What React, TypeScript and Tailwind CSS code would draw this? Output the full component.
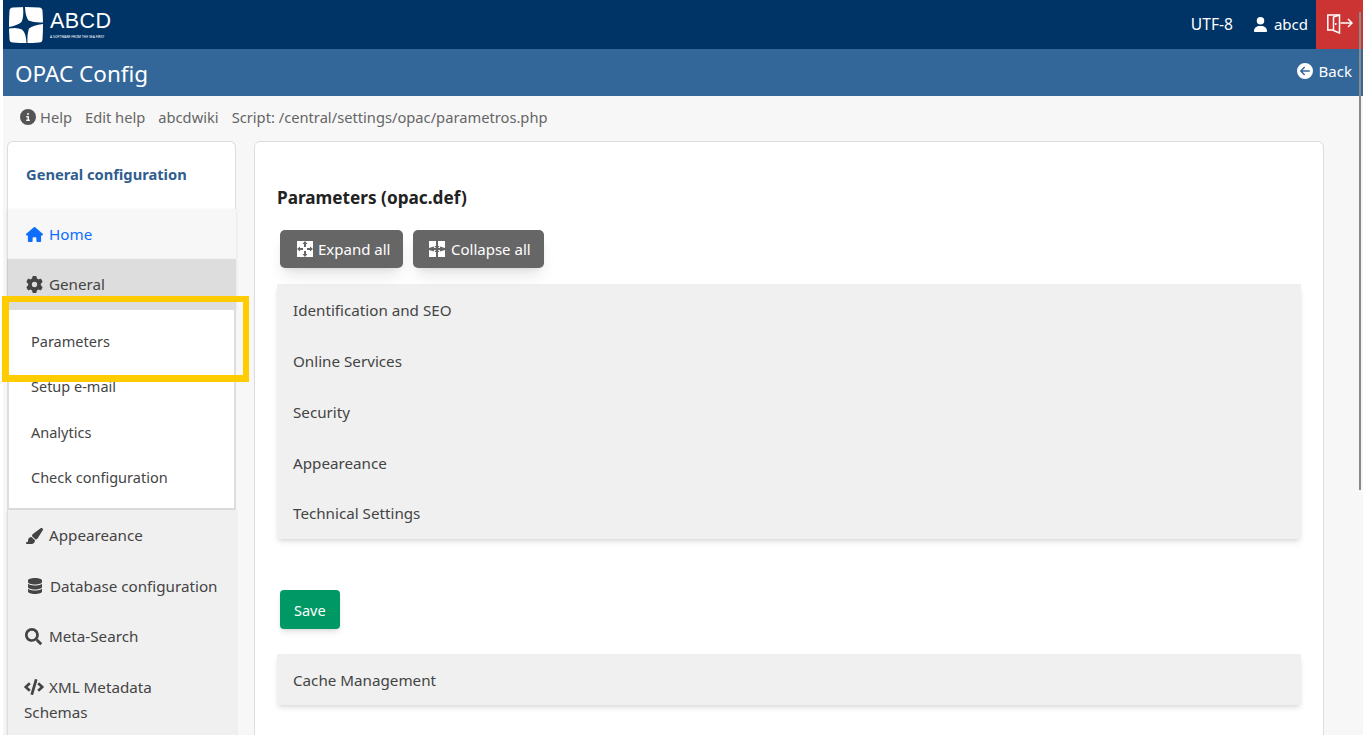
import { FaCode, FaSearch } from "react-icons/fa";
import { FaCircleArrowLeft, FaCircleInfo, FaDatabase, FaGear, FaHouse, FaPaintbrush, FaUser } from "react-icons/fa6";

const subItems = ["Parameters", "Setup e-mail", "Analytics", "Check configuration"];
const sections = ["Identification and SEO", "Online Services", "Security", "Appeareance", "Technical Settings"];

const Logo = () => (
    <svg width="34" height="36" viewBox="0 0 34 36">
        <path d="M4 .5 Q17 -.5 30 .5 Q33.5 .5 33.5 4 Q34.5 18 33.5 32 Q33.5 35.5 30 35.5 Q17 36.5 4 35.5 Q.5 35.5 .5 32 Q-.5 18 .5 4 Q.5 .5 4 .5 Z" fill="#fff" />
        <path d="M14 0 L16 0 Q16.5 10 19.5 13.5 Q25 16 34 15.5 L34 17 Q24 18 20 21.5 Q18 27 18.5 36 L17.5 36 Q17 26 13 22.5 Q8 20 0 21.5 L0 20 Q8 18.5 12.5 15 Q15 10 14 0 Z" fill="#003366" />
    </svg>
);

const LogoutIcon = () => (
    <svg width="26" height="21" viewBox="0 0 26 21" fill="none" stroke="#fff" strokeWidth="1.5">
        <path d="M12.5 2 H.8 V17 H6.5" />
        <path d="M12.5 2 V20 L6.5 17.5 V4 L12.5 2 Z" />
        <circle cx="8.8" cy="11" r=".9" fill="#fff" stroke="none" />
        <path d="M13.5 10 H25 M21 6 L25 10 L21 14" />
    </svg>
);

const ExpandIcon = () => (
    <svg width="16" height="16" viewBox="0 0 16 16">
        <rect width="16" height="16" fill="#fff" />
        <path d="M8 0 L10.5 3 H9 V6 H7 V3 H5.5 Z M8 16 L5.5 13 H7 V10 H9 V13 H10.5 Z M0 8 L3 5.5 V7 H6 V9 H3 V10.5 Z M16 8 L13 10.5 V9 H10 V7 H13 V5.5 Z" fill="#666" />
    </svg>
);

const CollapseIcon = () => (
    <svg width="16" height="16" viewBox="0 0 16 16" fill="#fff">
        <path d="M0 0 H7 V5 L5.5 5 L7 7 H5 L5 5.5 L0 7 Z" />
        <path d="M16 0 H9 V5 L10.5 5 L9 7 H11 L11 5.5 L16 7 Z" />
        <path d="M0 16 H7 V11 L5.5 11 L7 9 H5 L5 10.5 L0 9 Z" />
        <path d="M16 16 H9 V11 L10.5 11 L9 9 H11 L11 10.5 L16 9 Z" />
    </svg>
);

export default function App() {
    return (
        <div className="h-[735px] overflow-hidden bg-white pl-[3px] text-[15.2px] text-[#444] relative" style={{ fontFamily: '"Noto Sans", sans-serif' }}>
            <div className="h-[49px] bg-[#003366] flex items-center justify-between text-white">
                <div className="flex items-center pl-[6px]">
                    <Logo />
                    <div className="ml-[7px] leading-none">
                        <div className="text-[21.5px] tracking-[0.4px]" style={{ fontFamily: '"Liberation Sans", sans-serif' }}>ABCD</div>
                        <div className="text-[3.4px] mt-[2px]">A SOFTWARE FROM THE SEA FIRST</div>
                    </div>
                </div>
                <div className="flex items-center h-full">
                    <span className="mr-[20px] text-[15.6px]">UTF-8</span>
                    <FaUser className="size-[15px] mr-[6px]" />
                    <span className="mr-[8px] text-[15px]">abcd</span>
                    <div className="w-[47px] h-full bg-[#cc3333] flex items-center justify-center pb-[2px] pl-[1px]">
                        <LogoutIcon />
                    </div>
                </div>
            </div>
            <div className="h-[47px] bg-[#336699] flex justify-between text-white pl-[12px] pr-[11px]">
                <div className="text-[22.5px] leading-[50px]">OPAC Config</div>
                <div className="flex items-center gap-[6px] h-[44px] text-[15px]">
                    <FaCircleArrowLeft className="size-[16px]" />
                    <span>Back</span>
                </div>
            </div>
            <div className="bg-[#f7f7f7] h-[639px]">
                <div className="h-[45px] flex items-center pl-[17px] text-[#666] text-[14.7px] gap-[13px] pb-[2px]">
                    <span className="flex items-center gap-[4px]"><FaCircleInfo className="size-[16px] text-[#555]" />Help</span>
                    <span>Edit help</span>
                    <span>abcdwiki</span>
                    <span>Script: /central/settings/opac/parametros.php</span>
                </div>
                <div className="flex items-start pl-[4px]">
                    <div className="w-[229px] shrink-0 mr-[18px]">
                        <div className="h-[68px] bg-white border border-[#ddd] border-b-0 rounded-t-[6px] pl-[18px] pt-[21px] font-bold text-[14.7px] text-[#2f5d8f]">General configuration</div>
                        <div className="bg-[#f7f7f7] h-[50px] flex items-center pl-[18px] text-[#0d6efd] gap-[6px] shadow-sm border-l border-[#ddd]"><FaHouse className="size-[17px]" />Home</div>
                        <div className="bg-[#dddddd] h-[51px] flex items-center pl-[18px] gap-[6px] shadow-sm border-l border-[#ccc]"><FaGear className="size-[17px]" />General</div>
                        <div className="bg-white border-2 border-t-0 border-[#ddd] pt-[17px] pb-[9px] pl-[22px] text-[14.5px] h-[200px]">
                            {subItems.map((item) => (
                                <div key={item} className="h-[45.4px] pt-[4px]">{item}</div>
                            ))}
                        </div>
                        <div className="bg-[#f0f0f0] border-l border-[#ddd] shadow-sm h-[300px]">
                            <div className="h-[51px] flex items-center pl-[17px] gap-[6px]"><FaPaintbrush className="size-[18px]" />Appeareance</div>
                            <div className="h-[50px] flex items-center pl-[19px] gap-[7px]"><FaDatabase className="size-[16px]" />Database configuration</div>
                            <div className="h-[51px] flex items-center pl-[17px] gap-[7px]"><FaSearch className="size-[17px]" />Meta-Search</div>
                            <div className="pl-[16px] pr-[40px] pt-[13px] leading-[25px]"><FaCode className="size-[20px] inline mr-[5px] align-[-4px]" />XML Metadata Schemas</div>
                        </div>
                    </div>
                    <div className="w-[1070px] h-[600px] bg-white border border-[#ddd] rounded-t-[6px] pl-[22px] pr-[22px] pt-[44px]">
                        <div className="text-[17.2px] font-bold text-[#222] leading-[24px]">Parameters (opac.def)</div>
                        <div className="flex gap-[10px] pl-[3px] mt-[20px] text-[15px]">
                            <button className="h-[38px] w-[123px] pl-[17px] bg-[#666] text-white rounded-[5px] flex items-center gap-[5px] shadow-lg"><ExpandIcon />Expand all</button>
                            <button className="h-[38px] w-[131px] pl-[16px] bg-[#666] text-white rounded-[5px] flex items-center gap-[6px] shadow-lg"><CollapseIcon />Collapse all</button>
                        </div>
                        <div className="mt-[16px] bg-[#f0f0f0] shadow-md">
                            {sections.map((s) => (
                                <div key={s} className="h-[51px] flex items-center pl-[16px] pt-[2px] last:pt-0">{s}</div>
                            ))}
                        </div>
                        <button className="block ml-[3px] mt-[51px] h-[39px] px-[14px] rounded-[4px] bg-[#009966] text-white text-[14.5px] shadow-md pt-[2px]">Save</button>
                        <div className="mt-[25px] h-[51px] bg-[#f0f0f0] flex items-center pl-[16px] pt-[2px] shadow-md">Cache Management</div>
                    </div>
                </div>
            </div>
            <div className="absolute left-[2px] top-[296px] w-[247px] h-[86px] border-[6px] border-l-[7px] border-b-[7px] border-[#ffcc00]" />
            <div className="absolute right-[2px] top-[12px] w-[2px] h-[478px] bg-[#8a8a8a]" />
        </div>
    );
}
